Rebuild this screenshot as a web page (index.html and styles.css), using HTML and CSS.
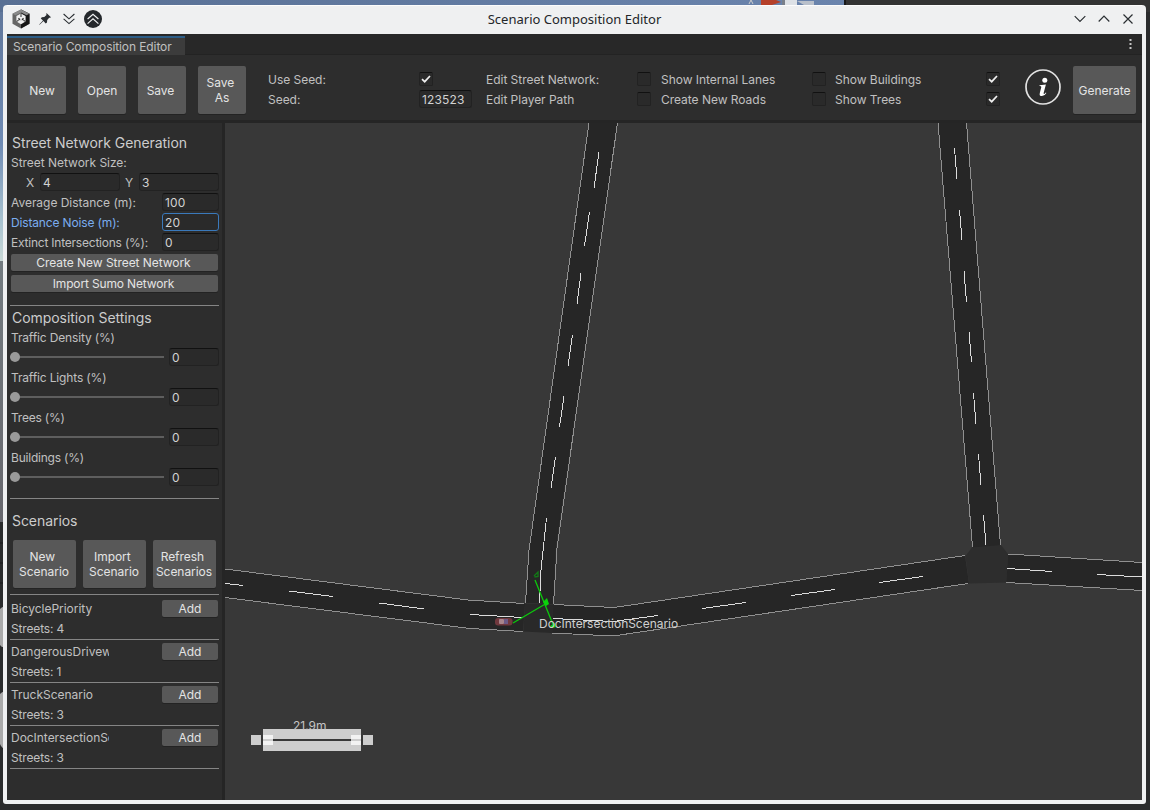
FILE: index.html
```html
<!DOCTYPE html>
<html lang="en">
<head>
<meta charset="utf-8">
<title>Scenario Composition Editor</title>
<link rel="stylesheet" href="styles.css">
</head>
<body>
<div class="desktop">
  <svg class="backdrop" width="1150" height="810" viewBox="0 0 1150 810">
    <defs>
      <linearGradient id="sky" x1="0" y1="0" x2="0" y2="1"><stop offset="0" stop-color="#5f7599"/><stop offset=".55" stop-color="#6f8bb4"/><stop offset=".85" stop-color="#a9c3cf"/><stop offset="1" stop-color="#c9d8d6"/></linearGradient>
      <linearGradient id="ground" x1="0" y1="0" x2="0" y2="1"><stop offset="0" stop-color="#737b80"/><stop offset="1" stop-color="#67676d"/></linearGradient>
      <linearGradient id="top" x1="0" y1="0" x2="1" y2="0"><stop offset="0" stop-color="#586f93"/><stop offset="1" stop-color="#6a84ad"/></linearGradient>
    </defs>
    <rect width="1150" height="810" fill="#2a2b2c"/>
    <rect width="10" height="261" fill="url(#sky)"/>
    <rect y="261" width="10" height="261" fill="url(#ground)"/>
    <rect width="844" height="12" fill="url(#top)"/>
    <rect x="844" width="2" height="12" fill="#181818"/>
    <rect x="846" width="304" height="12" fill="#333"/>
    <path d="M0 543h4M0 563h4M0 583h4" stroke="#191919"/>
    <path d="M0 609q3-3 5-2v40q-3 1-5-2zM0 694q3-3 5-2v56q-3 1-5-4z" fill="#aaa"/>
    <path d="M749 4l2-4 2 4" stroke="#ccc" fill="none"/>
    <path d="M761 0h15l5 2-9 3h-11z" fill="#b5402a"/>
    <path d="M785 0h12v5h-12z" fill="#dde1e6"/>
    <path d="M797 1h17v4h-10z" fill="#b9c0cb"/>
    <path d="M782 0h3v5h-3z" fill="#7a808a"/>
  </svg>
  <div class="window">
    <header class="titlebar">
      <div class="title-left">
        <svg width="18" height="20" viewBox="0 0 18 20"><path d="M9 .5l8.500 4.300v10L9 19.500.5 14.800V4.800z" fill="#666"/><path d="M9 .5l8.500 4.300v10L9 19.500z" fill="#161616"/><path d="M9 .5l8.500 4.300-3 1.500L9 3.500 3.500 6.300.5 4.800z" fill="#8a8a8a"/><path d="M9 4.500l4.600 2.500v5.500L9 15.200l-4.600-2.700V7z" fill="#eee"/><path d="M9 4.500v3.500M4.400 12.500l2.200-1.200M13.600 12.500l-2.200-1.200" stroke="#444" stroke-width="1.100"/><path d="M6.300 8.800l1.900 1v1.800l-1.900-1zM11.700 8.800l-1.900 1v1.800l1.900-1z" fill="#333"/></svg>
        <svg width="12" height="12" viewBox="0 0 12 12"><path d="M7.500 0L12 4.200l-1 .6-.8-.1-2 2.300-.2 2.400-1.300 1L4.500 8 .6 11.800l-.4-.4L4 7.500 1.800 5.400l1-1.200 2.500-.2 2.200-2-.2-.9z" fill="#2a2e32"/></svg>
        <svg width="12" height="12" viewBox="0 0 12 12"><path d="M.6 1l5.400 4.800L11.400 1M.6 5.800L6 10.600l5.400-4.800" fill="none" stroke="#2a2e32" stroke-width="1.100"/></svg>
        <svg width="18" height="18" viewBox="0 0 18 18"><circle cx="9" cy="9" r="9" fill="#24282c"/><path d="M3.600 9L9 4.300 14.400 9M3.600 13.600L9 8.900l5.400 4.700" fill="none" stroke="#eff0f1" stroke-width="1.200"/></svg>
      </div>
      <div class="title-text">Scenario Composition Editor</div>
      <div class="title-right">
        <svg width="12" height="8" viewBox="0 0 12 8"><path d="M.7 1.200L6 6.500l5.300-5.300" fill="none" stroke="#2a2e32" stroke-width="1.200"/></svg>
        <svg width="12" height="8" viewBox="0 0 12 8"><path d="M.7 6.500L6 1.200l5.300 5.300" fill="none" stroke="#2a2e32" stroke-width="1.200"/></svg>
        <svg width="10" height="10" viewBox="0 0 10 10"><path d="M.5.500l9 9M9.500.500l-9 9" fill="none" stroke="#2a2e32" stroke-width="1.200"/></svg>
      </div>
    </header>
    <div class="tabs">
      <div class="tab">Scenario Composition Editor</div>
      <svg class="kebab" width="3" height="10" viewBox="0 0 3 10"><path d="M.5 0h2v2h-2zM.5 4h2v2h-2zM.5 8h2v2h-2z" fill="#c4c4c4"/></svg>
    </div>
    <div class="toolbar">
      <div class="big-buttons">
        <button class="btn big">New</button>
        <button class="btn big">Open</button>
        <button class="btn big save">Save</button>
        <button class="btn big two-line">Save&nbsp;<br>As</button>
      </div>
      <div class="options seed">
        <div class="option"><span>Use Seed:</span><i class="check"><svg width="10" height="8" viewBox="0 0 10 8"><path d="M1 4.200l2.700 2.500L9 1" fill="none" stroke="#eee" stroke-width="1.700"/></svg></i></div>
        <div class="option"><span>Seed:</span><div class="field seed-field">123523</div></div>
      </div>
      <div class="options edit">
        <div class="option"><span>Edit Street Network:</span><i class="check"></i></div>
        <div class="option"><span>Edit Player Path</span><i class="check"></i></div>
      </div>
      <div class="options lanes">
        <div class="option"><span>Show Internal Lanes</span><i class="check"></i></div>
        <div class="option"><span>Create New Roads</span><i class="check"></i></div>
      </div>
      <div class="options show">
        <div class="option"><span>Show Buildings</span><i class="check"><svg width="10" height="8" viewBox="0 0 10 8"><path d="M1 4.200l2.700 2.500L9 1" fill="none" stroke="#eee" stroke-width="1.700"/></svg></i></div>
        <div class="option"><span>Show Trees</span><i class="check"><svg width="10" height="8" viewBox="0 0 10 8"><path d="M1 4.200l2.700 2.500L9 1" fill="none" stroke="#eee" stroke-width="1.700"/></svg></i></div>
      </div>
      <svg class="info" width="36" height="36" viewBox="0 0 36 36"><circle cx="18" cy="18" r="17" fill="none" stroke="#e2e2e2" stroke-width="1.700"/><circle cx="19.800" cy="11.200" r="2.500" fill="#fff"/><path d="M14.600 16.200l6.300-.8-2.200 8.300q-.3 1.400.5 1.200.8-.3 1.500-1.400l.7.500q-1.800 3.100-4.400 3.100-3 0-2.200-3.200l1.500-5.800q.2-.9-1.900-1.100z" fill="#fff"/></svg>
      <button class="btn generate">Generate</button>
    </div>
    <div class="main">
      <aside class="sidebar">
        <section class="network">
          <h2>Street Network Generation</h2>
          <div class="row"><span>Street Network Size:</span></div>
          <div class="row xy"><span class="axis-x">X</span><div class="field">4</div><span class="axis-y">Y</span><div class="field">3</div></div>
          <div class="row"><span>Average Distance (m):</span><div class="field num">100</div></div>
          <div class="row active"><span class="snug">Distance Noise (m):</span><div class="field num">20</div></div>
          <div class="row"><span class="tight">Extinct Intersections (%):</span><div class="field num">0</div></div>
          <button class="btn wide">Create New Street Network</button>
          <button class="btn wide snug">Import Sumo Network</button>
        </section>
        <section class="settings">
          <h2>Composition Settings</h2>
          <div class="row"><span class="snug">Traffic Density (%)</span></div>
          <div class="row slider"><div class="track"><i class="knob"></i></div><div class="field">0</div></div>
          <div class="row"><span class="snug">Traffic Lights (%)</span></div>
          <div class="row slider"><div class="track"><i class="knob"></i></div><div class="field">0</div></div>
          <div class="row"><span class="tight">Trees (%)</span></div>
          <div class="row slider"><div class="track"><i class="knob"></i></div><div class="field">0</div></div>
          <div class="row"><span class="tight">Buildings (%)</span></div>
          <div class="row slider"><div class="track"><i class="knob"></i></div><div class="field">0</div></div>
        </section>
        <section class="scenarios">
          <h2>Scenarios</h2>
          <div class="scenario-buttons">
            <button class="btn">New&nbsp;<br>Scenario</button>
            <button class="btn">Import&nbsp;<br>Scenario</button>
            <button class="btn">Refresh&nbsp;<br>Scenarios</button>
          </div>
        </section>
        <div class="scenario first"><div class="row"><span class="name">BicyclePriority</span><button class="btn add">Add</button></div><div class="row"><span class="snug">Streets: 4</span></div></div>
        <div class="scenario"><div class="row"><span class="name">DangerousDriveway</span><button class="btn add">Add</button></div><div class="row"><span class="snug">Streets: 1</span></div></div>
        <div class="scenario"><div class="row"><span class="name">TruckScenario</span><button class="btn add">Add</button></div><div class="row"><span class="snug">Streets: 3</span></div></div>
        <div class="scenario last"><div class="row"><span class="name">DocIntersectionScenario</span><button class="btn add">Add</button></div><div class="row"><span class="snug">Streets: 3</span></div></div>
      </aside>
      <svg class="map" width="917" height="677" viewBox="225 123 917 677">
        <g fill="#262626">
          <path d="M589 123L529 550 525.500 603 553.500 604 556 548 617.500 123z"/>
          <path d="M938 123L972.500 548 1000.500 546 966.500 123z"/>
          <path d="M225 569L468 600 525 603.500 523 632 470 628.500 225 598z"/>
          <path d="M553 604.500L614 607.500 965 555.500 969 583.500 613 636 552 633z"/>
          <path d="M1008 554L1142 562.500V590.500L1006 582.500z"/>
        </g>
        <path d="M525 603.500L553 604.500 552.500 633 523.500 631.500z" fill="#292929"/>
        <path d="M972 547.500L1001 545 1008 554 1006.500 582.500 969 583.500 965.500 556z" fill="#2d2d2d"/>
        <g class="edges">
          <path d="M589 123L529 550 525.500 603M617.500 123L557 548 553.500 604"/>
          <path d="M938 123L972.500 547M966.500 123L1000.500 545"/>
          <path d="M225 569L468 600 524 603.500M225 597.500L470 628.500 523 631.500"/>
          <path d="M554 604.500L614 607.500 965 555.500M552 633L613 636 968 583.500"/>
          <path d="M1008 554L1142 562.500M1006 582.500L1142 590.500"/>
        </g>
        <g class="dashes">
          <path d="M599 152l-5 36M589.500 212l-5 34M581 273l-4 31M572.500 335l-4.500 31M564 396l-4.500 31M555.500 457l-4.500 31M546.500 518L541 570 539.500 603"/>
          <path d="M954.500 148l2.500 31M959.500 210l2.500 30M964 271l2.500 31M969 332l2.500 30M973.500 393l2.500 31M978.500 454l2.500 31M983.500 515l2.500 30"/>
          <path d="M225 583.500l18 2M289 591l44 5.500M379 603l45 6M470 614.500l53 3"/>
          <path d="M553 618.500L613 621.500 658 615.500M702 608.500l44-6M791 595.500l44-6M879 582.500l44-6"/>
          <path d="M1007 568.500l45 3M1097 574.500l45 2.500"/>
        </g>
        <g class="paths"><path d="M535 580L554 627M513 623L547 603"/><path d="M543 602l4-4 2 6-3 2zM550 626l5-3 1 4-4 1z"/><path d="M534 576l4-4v4.500l-3.500.5"/></g>
        <rect x="495" y="618" width="17.500" height="7.500" rx="3" fill="#70383d"/><rect x="499" y="619" width="5" height="5" rx="1" fill="#a8868c"/><rect x="504" y="619" width="4" height="5" fill="#6c5a86"/>
        <text x="539" y="628" class="map-label">DocIntersectionScenario</text>
        <path d="M251 735h10v10h-10zM363 735h10v10h-10zM263 729h98v22h-98z" fill="#cdcdcd"/>
        <path d="M263 735h10v10h-10zM351 735h10v10h-10z" fill="#f3f3f3"/>
        <path d="M263 739h10v2h-10zM351 739h10v2h-10z" fill="#cdcdcd"/>
        <path d="M273 739h78v2h-78z" fill="#383838"/>
        <text x="293" y="730" class="map-scale">21.9m</text>
      </svg>
    </div>
  </div>
</div>
</body>
</html>
```
FILE: styles.css
```css
* { box-sizing: border-box; }
body { margin: 0; width: 1150px; height: 810px; overflow: hidden; font: 12px/15px Inter, "Liberation Sans", sans-serif; letter-spacing: -.03px; color: #c0c0c0; }
.desktop { position: relative; width: 1150px; height: 810px; padding: 5px 4px 6px 3px; }
.backdrop { position: absolute; left: 0; top: 0; }
.window { position: relative; width: 1143px; height: 799px; padding: 0 4px 4px; background: #eff0f1; border-radius: 4px 4px 3px 3px; display: flex; flex-direction: column; overflow: hidden; }

.titlebar { height: 29px; display: grid; grid-template-columns: 1fr auto 1fr; align-items: center; box-shadow: 0 1px #fcfcfc inset; padding-bottom: 1px; }
.title-left { display: flex; align-items: center; gap: 9px; padding-left: 5px; }
.title-left svg:nth-child(2) { margin-right: 3px; }
.title-text { font: 13px/20px "Noto Sans", sans-serif; letter-spacing: 0; color: #232629; padding-bottom: 1px; }
.title-right { display: flex; align-items: center; justify-content: flex-end; gap: 12px; padding-right: 9px; }
.title-right svg:nth-child(2) { margin-right: 1px; }
.titlebar svg { display: block; }

.tabs { height: 21px; background: #282828; border-bottom: 1px solid #232323; display: flex; justify-content: space-between; padding-top: 2px; flex: none; }
.tab { width: 178px; height: 19px; background: #3c3c3c; border-top: 2px solid #2c5d87; padding: 1px 6px; line-height: 16px; white-space: nowrap; letter-spacing: -.1px; }
.kebab { margin: 3px 10px 0 0; }

.toolbar { height: 65px; background: #2d2d2d; display: flex; padding: 11px 6px 6px 11px; flex: none; }
.btn { font: inherit; letter-spacing: -.05px; color: #e4e4e4; background: #585858; border: 0; border-radius: 2px; box-shadow: 0 1px #232323; padding: 0; text-align: center; flex: none; white-space: nowrap; }
.big-buttons { display: flex; gap: 12px; }
.btn.big { width: 48px; height: 48px; padding-top: 1px; }
.btn.big.save { padding-right: 3px; }
.btn.big.two-line { padding: 0 0 1px; }
.options { padding-top: 4px; }
.options.seed { width: 204px; margin-left: 22px; }
.options.edit { width: 165px; margin-left: 14px; }
.options.lanes { width: 165px; margin-left: 10px; }
.options.show { width: 165px; margin-left: 9px; }
.option { display: flex; justify-content: space-between; height: 20px; line-height: 20px; white-space: nowrap; }
.check { width: 14px; height: 14px; margin-top: 2px; border: 1px solid #222; border-top-color: #111; border-radius: 2px; background: #2a2a2a; display: flex; align-items: center; justify-content: center; }
.seed .check { margin-right: 39px; }
.field { height: 18px; border: 1px solid #222; border-top-color: #111; border-radius: 3px; background: #2a2a2a; color: #d2d2d2; padding: 0 2px; line-height: 17px; letter-spacing: .15px; }
.seed-field { width: 53px; }
.info { margin: 3px 0 0 25px; flex: none; }
.btn.generate { width: 63px; height: 48px; margin-left: auto; padding-top: 1px; letter-spacing: 0; }

.main { flex: 1; display: flex; border-top: 3px solid #252525; background: #252525; gap: 3px; }
.sidebar { width: 215px; background: #2d2d2d; padding: 10px 3px 0; }
h2 { margin: 0; padding-left: 2px; font: 14px/20px Inter, "Liberation Sans", sans-serif; letter-spacing: -.06px; color: #ccc; }
.row { display: flex; height: 20px; line-height: 20px; padding-left: 1px; justify-content: space-between; white-space: nowrap; }
.network { height: 172px; }
.xy .field { width: 80px; }
.xy { justify-content: flex-start; }
.axis-x { width: 29px; padding-left: 15px; }
.axis-y { width: 19px; padding-left: 5px; }
.num { width: 57px; }
.snug, .btn.snug { letter-spacing: -.15px; }
.tight { letter-spacing: -.22px; }
.active { color: #7badf0; }
.active .field { border-color: #3a79bb; }
.btn.wide { display: block; width: 207px; height: 17px; margin: 1px 0 4px 1px; padding-right: 2px; }
.settings, .scenarios, .scenario { border-top: 1px solid #858585; }
.settings { height: 193px; padding-top: 2px; }
.slider { padding-left: 0; }
.slider .field { width: 50px; }
.track { position: relative; width: 154px; height: 2px; margin-top: 8px; background: #5e5e5e; }
.knob { position: absolute; left: 0; top: -4px; width: 10px; height: 10px; border-radius: 50%; background: #999; }
.scenarios { height: 96px; padding-top: 12px; }
.scenario-buttons { display: flex; gap: 7px; padding: 9px 0 0 3px; }
.scenario-buttons .btn { width: 63px; height: 48px; padding: 0 1px 1px 0; overflow: hidden; }
.scenario { height: 43px; padding: 2px 1px 0 0; }
.scenario.first { height: 45px; padding-top: 4px; }
.scenario.last { height: 44px; border-bottom: 1px solid #858585; }
.name { width: 98px; overflow: hidden; }
.btn.add { width: 56px; height: 17px; margin-top: 1px; line-height: 17px; }

.map { display: block; background: #383838; }
.edges, .dashes { shape-rendering: crispEdges; }
.edges path { fill: none; stroke: #909090; stroke-width: 1; }
.dashes path { fill: none; stroke: #dcdcdc; stroke-width: 1; }
.paths path { fill: none; stroke: #0cc80c; stroke-width: 1.3; }
.paths path:nth-child(2) { fill: #0cd20c; stroke: none; }
.paths path:nth-child(3) { stroke: #127a16; }
.map-label { fill: #d0d0d0; }
.map-scale { fill: #c4c4c4; letter-spacing: 0; }
```
